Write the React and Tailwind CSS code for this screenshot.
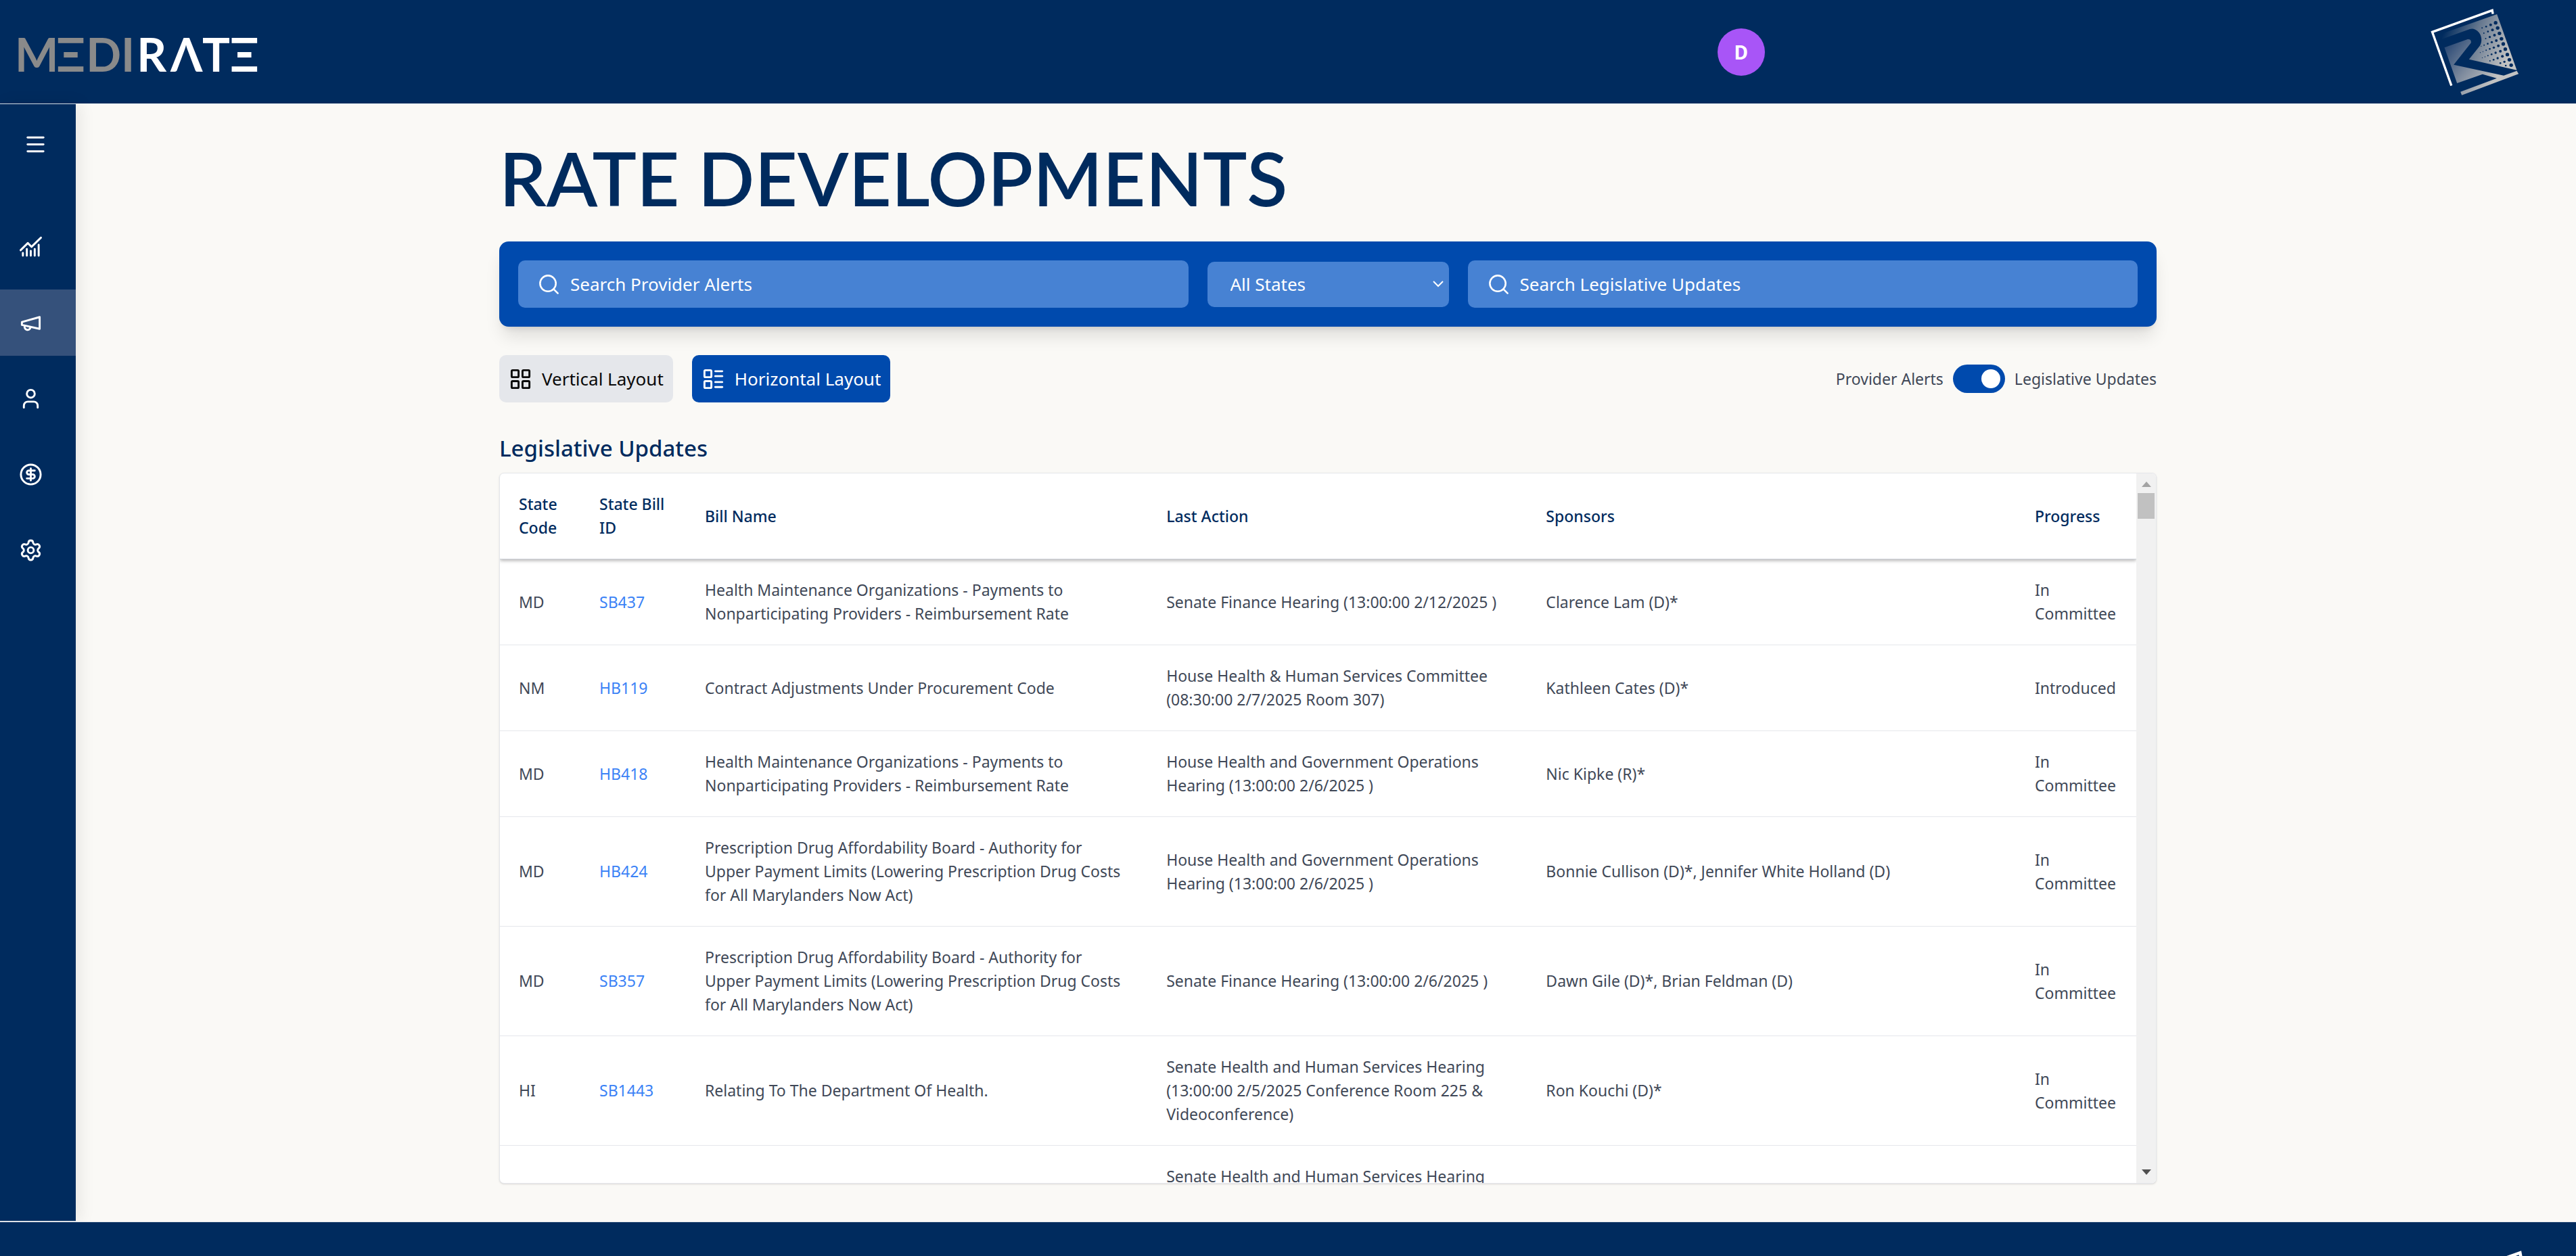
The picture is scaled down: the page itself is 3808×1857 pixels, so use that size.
import { useState } from "react";
import {
  CircleDollarSign,
  LayoutGrid,
  LayoutList,
  Menu,
  Search,
  Settings,
  User,
} from "lucide-react";

const BILLS = [
  {
    state: "MD",
    id: "SB437",
    name: "Health Maintenance Organizations - Payments to Nonparticipating Providers - Reimbursement Rate",
    action: "Senate Finance Hearing (13:00:00 2/12/2025 )",
    sponsors: "Clarence Lam (D)*",
    progress: "In Committee",
  },
  {
    state: "NM",
    id: "HB119",
    name: "Contract Adjustments Under Procurement Code",
    action: "House Health & Human Services Committee (08:30:00 2/7/2025 Room 307)",
    sponsors: "Kathleen Cates (D)*",
    progress: "Introduced",
  },
  {
    state: "MD",
    id: "HB418",
    name: "Health Maintenance Organizations - Payments to Nonparticipating Providers - Reimbursement Rate",
    action: "House Health and Government Operations Hearing (13:00:00 2/6/2025 )",
    sponsors: "Nic Kipke (R)*",
    progress: "In Committee",
  },
  {
    state: "MD",
    id: "HB424",
    name: "Prescription Drug Affordability Board - Authority for Upper Payment Limits (Lowering Prescription Drug Costs for All Marylanders Now Act)",
    action: "House Health and Government Operations Hearing (13:00:00 2/6/2025 )",
    sponsors: "Bonnie Cullison (D)*, Jennifer White Holland (D)",
    progress: "In Committee",
  },
  {
    state: "MD",
    id: "SB357",
    name: "Prescription Drug Affordability Board - Authority for Upper Payment Limits (Lowering Prescription Drug Costs for All Marylanders Now Act)",
    action: "Senate Finance Hearing (13:00:00 2/6/2025 )",
    sponsors: "Dawn Gile (D)*, Brian Feldman (D)",
    progress: "In Committee",
  },
  {
    state: "HI",
    id: "SB1443",
    name: "Relating To The Department Of Health.",
    action: "Senate Health and Human Services Hearing (13:00:00 2/5/2025 Conference Room 225 & Videoconference)",
    sponsors: "Ron Kouchi (D)*",
    progress: "In Committee",
  },
  {
    state: "",
    id: "",
    name: "",
    action: "Senate Health and Human Services Hearing",
    sponsors: "",
    progress: "",
  },
];

function Wordmark() {
  return (
    <svg
      role="img"
      aria-label="MEDIRATE"
      viewBox="60 94 1110 291"
      className="h-[97px] w-[370px]"
      fontSize="205"
      fontWeight="700"
    >
      <g fill="#8a8a8a" className="font-[Lato,'Noto_Sans',sans-serif]">
        <text y="315" x="66 250 382 537">MΞDI</text>
      </g>
      <g fill="#ffffff" className="font-[Lato,'Noto_Sans',sans-serif]">
        <text y="315" x="607 756 897 1020">RΛTΞ</text>
      </g>
    </svg>
  );
}

const DOTS = [
  [390, 121, 3], [408, 115, 4], [428, 107, 6], [450, 98, 8],
  [398, 144, 3], [416, 137, 4], [436, 130, 6], [459, 121, 8],
  [406, 168, 3], [424, 161, 5], [445, 153, 6], [467, 145, 8],
  [386, 202, 2], [399, 197, 3], [415, 191, 4], [433, 184, 5], [453, 177, 6], [476, 169, 8],
  [382, 230, 2], [394, 226, 2], [408, 220, 3], [424, 214, 4], [442, 208, 5], [462, 200, 6], [484, 192, 8],
  [391, 253, 2], [403, 249, 2], [416, 244, 3], [432, 238, 4], [450, 231, 5], [471, 224, 6], [493, 215, 8],
  [425, 267, 3], [441, 262, 4], [459, 255, 5], [480, 247, 6], [502, 239, 8],
  [471, 277, 4], [489, 271, 5], [511, 262, 8],
  [495, 288, 4], [519, 286, 8],
];

function BrandMark({ id, className }) {
  return (
    <svg viewBox="162 36 392 384" className={className} aria-hidden="true">
      <defs>
        <linearGradient id={id} x1="215" y1="150" x2="500" y2="260" gradientUnits="userSpaceOnUse">
          <stop offset="0" stopColor="#002b5e" />
          <stop offset="0.45" stopColor="#66788f" />
          <stop offset="1" stopColor="#c2c2c2" />
        </linearGradient>
        <linearGradient id={id + "-base"} x1="230" y1="210" x2="430" y2="370" gradientUnits="userSpaceOnUse">
          <stop offset="0" stopColor="#2f4d78" />
          <stop offset="0.5" stopColor="#7d8a9d" />
          <stop offset="1" stopColor="#c2c2c2" />
        </linearGradient>
      </defs>
      <path d="M254 377 L169 139 L435 43 L438 59" fill="none" stroke="#fff" strokeWidth="10" />
      <path d="M207 148 L456 60 L544 308 L332 260 L380 200 C396 175 386 135 352 125 Q338 123 325 130 L213 170 Z" fill={`url(#${id})`} />
      <path d="M223 208 L326 171 Q343 170 341 187 L264 284 L486 332 L544 311 L552 325 L300 419 L294 404 L455 344 L392 326 L279 366 Z" fill={`url(#${id}-base)`} />
      <g fill="#002b5e">
        {DOTS.map(([x, y, r]) => (
          <circle key={`${x}-${y}`} cx={x} cy={y} r={r} />
        ))}
      </g>
    </svg>
  );
}

function TrendIcon({ className }) {
  return (
    <svg viewBox="0 0 24 24" className={className} fill="none" stroke="currentColor" strokeWidth="2" strokeLinecap="round" strokeLinejoin="round">
      <path d="M1.7 15 L9 7.8 L12.8 11.6 L22.3 2.3" />
      <path d="M4 17.8V20.6M8 13.8V20.6M12 15.8V20.6M16 13.8V20.6M20 9.6V20.6" />
    </svg>
  );
}

function MegaphoneIcon({ className }) {
  return (
    <svg viewBox="0 0 24 24" className={className} fill="none" stroke="currentColor" strokeWidth="2" strokeLinecap="round" strokeLinejoin="round">
      <path d="m3 11 18-5v12L3 14v-3z" />
      <path d="M11.6 16.8a3 3 0 1 1-5.8-1.6" />
    </svg>
  );
}

const NAV = [
  { label: "Dashboard", Icon: TrendIcon },
  { label: "Rate Developments", Icon: MegaphoneIcon, active: true },
  { label: "Profile", Icon: User },
  { label: "Pricing", Icon: CircleDollarSign },
  { label: "Settings", Icon: Settings },
];

function SearchBox({ label }) {
  return (
    <label className="flex h-[70px] min-w-0 flex-1 items-center gap-3.5 rounded-[10px] bg-[#4782d3] px-7 text-white">
      <Search size={35} strokeWidth={1.75} className="shrink-0" />
      <input
        type="text"
        aria-label={label}
        placeholder={label}
        className="min-w-0 flex-1 bg-transparent text-[26px] leading-10 outline-none placeholder:text-white placeholder:opacity-100"
      />
    </label>
  );
}

export default function App() {
  const [legislative, setLegislative] = useState(true);
  return (
    <div className="flex h-screen flex-col overflow-hidden bg-[#faf9f6] font-['Noto_Sans',sans-serif]">
      <header className="grid h-[153px] shrink-0 grid-cols-[2fr_1fr] items-center bg-[#002b5e]">
        <div className="px-5 pt-2">
          <Wordmark />
        </div>
        <div className="flex items-center justify-between pr-[84px]">
          <button type="button" aria-label="Account" className="size-[70px] rounded-full bg-[#a855f7] text-[28px] font-bold text-white">
            D
          </button>
          <BrandMark id="mark-top" className="h-32 w-[131px]" />
        </div>
      </header>

      <div className="flex min-h-0 flex-1">
        <nav className="flex w-28 shrink-0 flex-col border-y border-[#d5dbe3] bg-[#002b5e] pt-[42px] text-white shadow-[6px_0_22px_rgba(0,0,0,0.08)]">
          <button type="button" aria-label="Toggle menu" className="ml-[35px] size-[35px]">
            <Menu size={35} />
          </button>
          <div className="mt-[85px] flex flex-col gap-3.5">
            {NAV.map(({ label, Icon, active }) => (
              <a
                key={label}
                href="#"
                aria-label={label}
                className={active ? "flex h-[98px] items-center bg-[#35517b] px-7" : "flex h-[98px] items-center px-7"}
              >
                <Icon className="size-[35px]" />
              </a>
            ))}
          </div>
        </nav>

        <main className="flex min-w-0 flex-1 justify-center pt-[54px] pb-14 pl-1.5">
          <div className="flex min-h-0 w-full max-w-[2450px] flex-col">
            <h1 className="font-[Lato,sans-serif] text-[110px] leading-none font-semibold text-[#002b5e]">
              RATE DEVELOPMENTS
            </h1>

            <div className="mt-10 flex items-center gap-7 rounded-[14px] bg-[#004aad] p-7 shadow-[0_18px_26px_-5px_rgba(0,0,0,0.12),0_7px_10px_-6px_rgba(0,0,0,0.12)]">
              <SearchBox label="Search Provider Alerts" />
              <div className="relative w-[357px]">
                <select
                  aria-label="State"
                  className="block h-[67px] w-full appearance-none rounded-[10px] bg-[#4782d3] px-[34px] text-[26px] text-white outline-none"
                >
                  <option>All States</option>
                </select>
                <svg viewBox="0 0 16 10" className="pointer-events-none absolute top-7 right-2 h-2.5 w-4" fill="none" stroke="#fff" strokeWidth="2">
                  <path d="M1 1l7 7 7-7" />
                </svg>
              </div>
              <SearchBox label="Search Legislative Updates" />
            </div>

            <div className="mt-[42px] flex items-center justify-between">
              <div className="flex gap-7 text-[26px]">
                <button type="button" className="flex h-[70px] items-center gap-3.5 rounded-[10px] bg-gray-200 px-3.5 text-[#0a0a0a]">
                  <LayoutGrid size={35} />
                  Vertical Layout
                </button>
                <button type="button" className="flex h-[70px] items-center gap-3.5 rounded-[10px] bg-[#004aad] px-3.5 text-white">
                  <LayoutList size={35} />
                  Horizontal Layout
                </button>
              </div>
              <label className="flex items-center gap-3.5 text-[23px] text-[#404857]">
                Provider Alerts
                <input
                  type="checkbox"
                  role="switch"
                  checked={legislative}
                  onChange={(e) => setLegislative(e.target.checked)}
                  className="flex h-[42px] w-[77px] appearance-none items-center rounded-full bg-gray-300 px-[7px] before:size-7 before:rounded-full before:bg-white checked:justify-end checked:bg-[#004aad]"
                />
                Legislative Updates
              </label>
            </div>

            <h2 className="mt-11 mb-3 text-[33px] leading-[48px] font-medium text-[#002b5e]">
              Legislative Updates
            </h2>

            <div className="flex min-h-0 flex-1 overflow-hidden rounded-[7px] border border-gray-200 bg-white shadow-sm">
              <div className="min-w-0 flex-1 overflow-hidden">
                <table className="w-full table-fixed border-separate border-spacing-0 text-left text-[23px] leading-[35px] text-[#404857]">
                  <colgroup>
                    <col className="w-[119px]" />
                    <col className="w-[156px]" />
                    <col className="w-[28.2%]" />
                    <col className="w-[23.2%]" />
                    <col />
                    <col className="w-[178px]" />
                  </colgroup>
                  <thead className="shadow-[0_2px_5px_rgba(0,0,0,0.3)]">
                    <tr className="text-[#002b5e]">
                      {["State Code", "State Bill ID", "Bill Name", "Last Action", "Sponsors", "Progress"].map((h) => (
                        <th key={h} scope="col" className="border-b border-gray-300 px-7 py-7 font-medium">
                          {h}
                        </th>
                      ))}
                    </tr>
                  </thead>
                  <tbody className="[&_td]:border-b [&_td]:border-gray-200 [&_td]:px-7 [&_td]:py-7">
                    {BILLS.map((bill, i) => (
                      <tr key={i}>
                        <td>{bill.state}</td>
                        <td>
                          {bill.id && (
                            <a href="#" className="text-[#3b82f6]">
                              {bill.id}
                            </a>
                          )}
                        </td>
                        <td>{bill.name}</td>
                        <td>{bill.action}</td>
                        <td>{bill.sponsors}</td>
                        <td>{bill.progress}</td>
                      </tr>
                    ))}
                  </tbody>
                </table>
              </div>
              <div aria-hidden="true" className="flex w-[29px] shrink-0 flex-col items-center bg-[#f1f1f1] pt-3 pb-3">
                <svg viewBox="0 0 14 8" className="h-2 w-3.5" fill="#a3a3a3">
                  <path d="M0 8L7 0l7 8z" />
                </svg>
                <div className="mt-[9px] h-[38px] w-[25px] bg-[#c1c1c1]" />
                <svg viewBox="0 0 14 8" className="mt-auto h-2 w-3.5" fill="#505050">
                  <path d="M0 0h14L7 8z" />
                </svg>
              </div>
            </div>
          </div>
        </main>
      </div>

      <footer className="flex h-[51px] shrink-0 items-start justify-end overflow-hidden border-t border-gray-200 bg-[#002b5e] pt-[42px] pr-7">
        <BrandMark id="mark-foot" className="h-[176px] w-[180px] shrink-0" />
      </footer>
    </div>
  );
}
